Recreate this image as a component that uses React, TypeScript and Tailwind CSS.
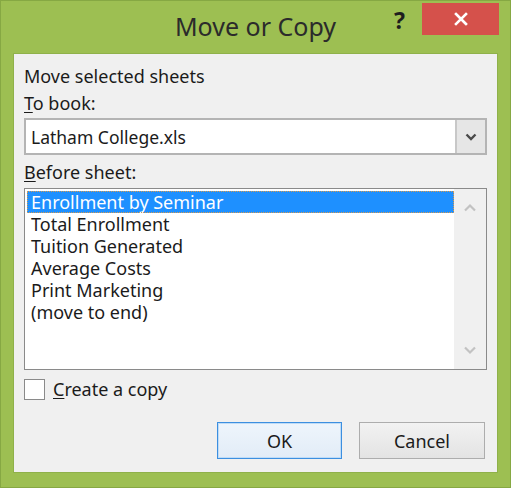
import { useState } from 'react';

const sheets = [
  'Enrollment by Seminar',
  'Total Enrollment',
  'Tuition Generated',
  'Average Costs',
  'Print Marketing',
  '(move to end)',
];

export default function App() {
  const [selected, setSelected] = useState(0);
  const [copy, setCopy] = useState(false);

  return (
    <div
      className="w-[511px] h-[488px] bg-[#9dbf52] border border-[#86a843] flex flex-col text-[#1b1b1b]"
      style={{ fontFamily: '"Noto Sans", "Open Sans", sans-serif' }}
    >
      {/* Title bar */}
      <div className="h-[52px] grid grid-cols-[1fr_auto_1fr] items-start">
        <div />
        <div className="pt-[8px] text-[25px] leading-[34px] text-[#2b2b2b]">Move or Copy</div>
        <div className="flex justify-end items-start pt-[2px] pr-[11px]">
          <span className="mt-[3px] mr-[17px] text-[23px] font-bold leading-[28px] text-[#1e1e1e]">?</span>
          <button className="w-[77px] h-[32px] bg-[#d5514b] flex items-center justify-center">
            <svg width="14" height="14" viewBox="0 0 14 14">
              <path d="M2 2 L12 12 M12 2 L2 12" stroke="#fff" strokeWidth="2.6" strokeLinecap="square" />
            </svg>
          </button>
        </div>
      </div>

      {/* Content */}
      <div className="mx-[12px] mb-[14px] flex-1 bg-[#f0f0f0] border border-[#8fb14a] px-[10px] pt-[11px] text-[18px] leading-[22px]">
        <div>Move selected sheets</div>
        <div className="mt-[5px]">
          <span className="underline underline-offset-2">T</span>o book:
        </div>

        {/* Combo box */}
        <div className="mt-[4px] h-[37px] flex border-2 border-[#b4b4b4] bg-white text-[17.5px]">
          <div className="flex-1 flex items-center pl-[5px]">Latham College.xls</div>
          <div className="w-[30px] bg-[#e6e6e6] border-l-2 border-[#c8c8c8] flex items-center justify-center">
            <svg width="12" height="8" viewBox="0 0 12 8">
              <path d="M1.5 1.5 L6 6 L10.5 1.5" fill="none" stroke="#4a4a4a" strokeWidth="2.4" />
            </svg>
          </div>
        </div>

        <div className="mt-[6px]">
          <span className="underline underline-offset-2">B</span>efore sheet:
        </div>

        {/* List box */}
        <div className="mt-[5px] h-[182px] flex border border-[#8a8a8a] bg-white">
          <div className="flex-1 p-[2px] pr-0">
            {sheets.map((s, i) => (
              <div
                key={s}
                onClick={() => setSelected(i)}
                className={`h-[22px] pl-[4px] whitespace-nowrap ${
                  i === selected
                    ? 'bg-[#1e90ff] text-white outline-1 outline-dotted outline-[#d79a4e] -outline-offset-1'
                    : ''
                }`}
              >
                {s}
              </div>
            ))}
          </div>
          <div className="w-[32px] bg-[#f0f0f0] flex flex-col justify-between items-center py-[14px]">
            <svg width="14" height="9" viewBox="0 0 14 9">
              <path d="M2 7.5 L7 2.5 L12 7.5" fill="none" stroke="#c2c2c2" strokeWidth="2.2" />
            </svg>
            <svg width="14" height="9" viewBox="0 0 14 9">
              <path d="M2 1.5 L7 6.5 L12 1.5" fill="none" stroke="#c2c2c2" strokeWidth="2.2" />
            </svg>
          </div>
        </div>

        {/* Checkbox */}
        <label className="mt-[8px] flex items-center gap-[8px] cursor-default">
          <span
            onClick={() => setCopy(!copy)}
            className="w-[21px] h-[21px] border border-[#8a8a8a] bg-white flex items-center justify-center text-[13px]"
          >
            {copy ? '✓' : ''}
          </span>
          <span>
            <span className="underline underline-offset-2">C</span>reate a copy
          </span>
        </label>

        {/* Buttons */}
        <div className="mt-[22px] flex justify-end gap-[17px] pr-[2px]">
          <button className="w-[125px] h-[37px] border border-[#3c8fe0] bg-gradient-to-b from-[#eef5fc] to-[#e2ecf7] shadow-[inset_0_0_0_1px_#bfdcf7]">
            OK
          </button>
          <button className="w-[126px] h-[37px] border border-[#adadad] bg-gradient-to-b from-[#f2f2f2] to-[#e3e3e3]">
            Cancel
          </button>
        </div>
      </div>
    </div>
  );
}
